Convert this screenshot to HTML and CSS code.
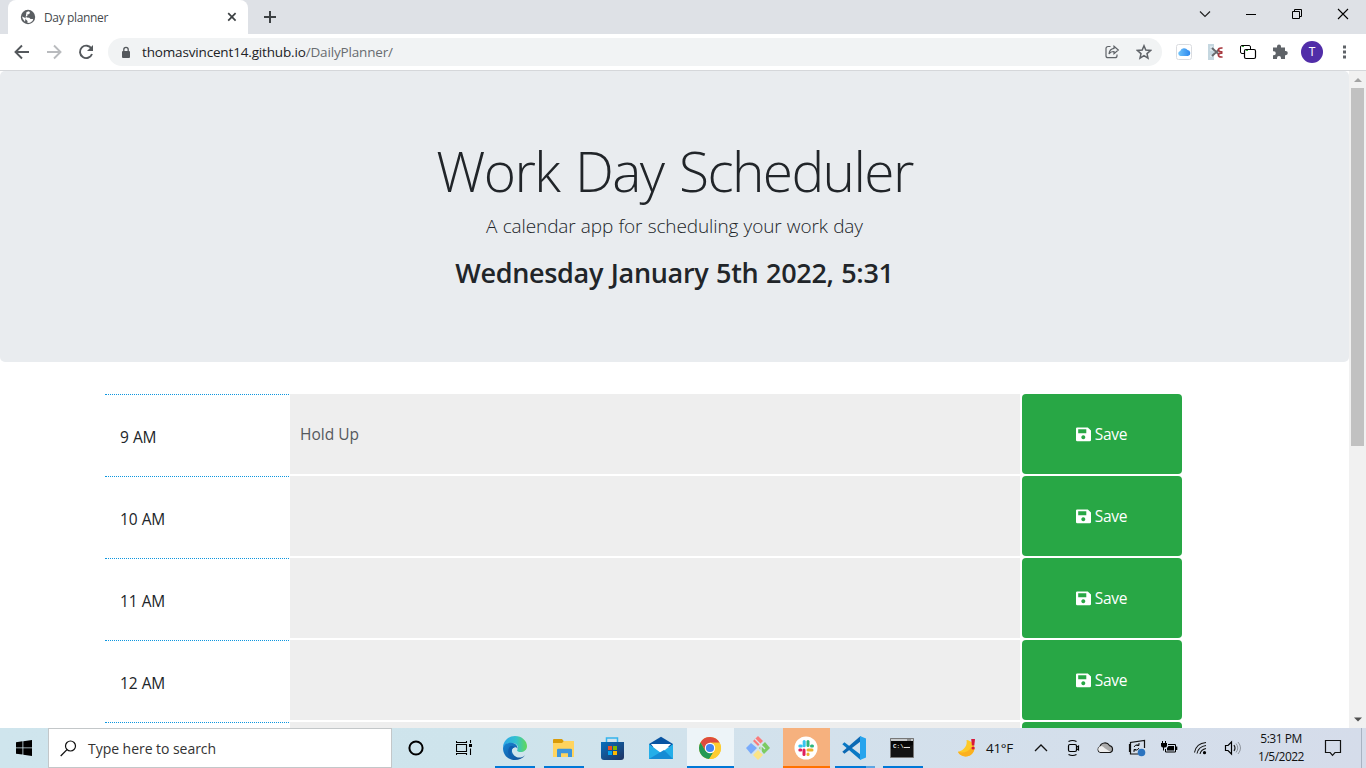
FILE: index.html
```html
<!DOCTYPE html>
<html lang="en">
<head>
<meta charset="utf-8">
<title>Day planner</title>
<link rel="stylesheet" href="styles.css">
</head>
<body>
<svg class="defs" width="0" height="0">
  <symbol id="save" viewBox="0 0 15 15"><path fill-rule="evenodd" d="M1.2.4h10.6L15 3.4V13a1.3 1.3 0 0 1-1.3 1.3H1.300A1.300 1.300 0 0 1 0 13V1.600A1.200 1.200 0 0 1 1.200.4zM2.200 2.300v3.900h8.100V2.300zM7.300 8.300a2 2 0 1 0 .01 0z"/></symbol>
</svg>
<div class="screen">
  <header class="tabstrip">
    <div class="tab">
      <svg class="globe" width="16" height="16" viewBox="0 0 16 16"><circle cx="8" cy="8" r="7.200" fill="#5a5e62"/><path d="M6.500 3 9 2.200l1 1.500-1 1.600H7.500v1.400l-1.300.6.5 1.200 2.600.2 1.200 1.300 2.700.1L12.500 12 10 13.700l-2.500.2V12L6 10.600 5.300 9 2 7.600 2.800 9.800 5 12.800" fill="#fff"/></svg>
      <span class="tab-title">Day planner</span>
      <svg width="10" height="10" viewBox="0 0 10 10"><path d="M1.200 1.200l7.400 7.400M8.600 1.200 1.200 8.600" stroke="#3c4043" stroke-width="1.700"/></svg>
    </div>
    <svg class="newtab" width="14" height="14" viewBox="0 0 14 14"><path d="M7 1v12M1 7h12" stroke="#3c4043" stroke-width="2"/></svg>
    <div class="winctl">
      <svg viewBox="0 0 46 28"><path d="M18 11.500l5 5 5-5" fill="none" stroke="#222" stroke-width="1.200"/></svg>
      <svg viewBox="0 0 46 28"><path d="M18 14.500h10" stroke="#000"/></svg>
      <svg viewBox="0 0 46 28"><path d="M18.500 11.500h7v7h-7zM20.500 11V9.500h7v7H26" fill="none" stroke="#000"/></svg>
      <svg viewBox="0 0 46 28"><path d="M18 9l10 10M28 9 18 19" stroke="#000" stroke-width="1.100"/></svg>
    </div>
  </header>
  <nav class="toolbar">
    <svg class="nav" viewBox="0 0 32 32"><path d="M23 16H10M16 9.500 9.500 16l6.500 6.500" fill="none" stroke="#54585c" stroke-width="1.900"/></svg>
    <svg class="nav" viewBox="0 0 32 32"><path d="M9 16h13M16 9.500l6.500 6.500-6.500 6.500" fill="none" stroke="#b9bbbe" stroke-width="1.900"/></svg>
    <svg class="nav" viewBox="0 0 32 32"><path d="M21.500 12.700A6.200 6.200 0 1 0 22 18" fill="none" stroke="#54585c" stroke-width="1.900"/><path d="M23 9v6h-6z" fill="#54585c"/></svg>
    <div class="omnibox">
      <svg width="10" height="13" viewBox="0 0 10 13"><rect x="1" y="5" width="8" height="7" rx="1" fill="#54585c"/><path d="M2.800 5.500V3.500a2.200 2.200 0 0 1 4.400 0v2" fill="none" stroke="#54585c" stroke-width="1.300"/></svg>
      <span class="url">thomasvincent14.github.io<span class="path">/DailyPlanner/</span></span>
      <svg class="share" width="16" height="16" viewBox="0 0 16 16"><path d="M6.500 2.500H4a2 2 0 0 0-2 2v7.200a2 2 0 0 0 2 2h7a2 2 0 0 0 2-2V10.500" fill="none" stroke="#5f6368" stroke-width="1.200"/><path d="M10 2.300 14.300 6 10 9.600V7.500c-2.300 0-4 .7-5 2.500.3-3 2-5.200 5-5.600z" fill="none" stroke="#5f6368" stroke-width="1.200"/></svg>
      <svg width="16" height="16" viewBox="0 0 16 16"><path d="M8 1.800l1.800 4.300 4.700.4L11 9.600l1 4.600-4-2.500-4 2.500 1-4.600-3.500-3.100 4.700-.4z" fill="none" stroke="#5f6368" stroke-width="1.500"/></svg>
    </div>
    <div class="exts">
      <svg viewBox="0 0 32 32"><defs><linearGradient id="cl"><stop stop-color="#6fc3fa"/><stop offset="1" stop-color="#2c88ee"/></linearGradient></defs><rect x="8.500" y="8.500" width="15" height="15" rx="2" fill="#fff" stroke="#dadce0"/><path d="M12.500 20a2.600 2.600 0 0 1-.3-5.100 4.200 4.200 0 0 1 7.400-.8 3 3 0 0 1 .4 5.900z" fill="url(#cl)"/></svg>
      <svg viewBox="0 0 32 32"><path d="M8 8h6v16H8z" fill="#c5d7e0"/><path d="M10 11h3M10 14h3M10 20h3" stroke="#eef5f8"/><path d="M12 12l7 6.500M12 20l7-6.500" stroke="#66696d" stroke-width="1.900"/><path d="M22.500 12.200c-3-.7-4.500.8-4 2.300s2.500 1.500 4 1.300M22.500 20.800c-3 .7-4.500-.8-4-2.300s2.500-1.500 4-1.300" fill="none" stroke="#a8393f" stroke-width="1.700"/></svg>
      <svg viewBox="0 0 32 32"><rect x="8.500" y="9.500" width="10" height="8" rx="1.500" fill="#fff" stroke="#000"/><rect x="12.500" y="13.500" width="11" height="9" rx="1.500" fill="#fff" stroke="#000" stroke-width="1.200"/><path d="M10 10.500h2M14 14.500h2" stroke="#38a638"/></svg>
      <svg viewBox="0 0 32 32"><path d="M9 11.500h4V10.600a2 2 0 0 1 4 0v.9h4V15h.7a2.100 2.100 0 0 1 0 4.200H21V23h-4v-1a2 2 0 0 0-4 0v1H9v-3.800h.8a2 2 0 0 0 0-4H9z" fill="#5f6368"/></svg>
      <span class="avatar">T</span>
      <svg viewBox="0 0 32 32"><path fill="#5f6368" d="M15 9.500h3v3h-3zM15 14.500h3v3h-3zM15 19.500h3v3h-3z"/></svg>
    </div>
  </nav>
  <main class="viewport">
    <div class="page">
      <section class="jumbotron">
        <h1>Work Day Scheduler</h1>
        <p class="lead">A calendar app for scheduling your work day</p>
        <p class="today">Wednesday January 5th 2022, 5:31</p>
      </section>
      <section class="planner">
        <div class="row"><div class="hour">9 AM</div><div class="entry">Hold Up</div><button class="save"><svg width="15" height="15"><use href="#save"/></svg><span>Save</span></button></div>
        <div class="row"><div class="hour">10 AM</div><div class="entry"></div><button class="save"><svg width="15" height="15"><use href="#save"/></svg><span>Save</span></button></div>
        <div class="row"><div class="hour">11 AM</div><div class="entry"></div><button class="save"><svg width="15" height="15"><use href="#save"/></svg><span>Save</span></button></div>
        <div class="row"><div class="hour">12 AM</div><div class="entry"></div><button class="save"><svg width="15" height="15"><use href="#save"/></svg><span>Save</span></button></div>
        <div class="row"><div class="hour"></div><div class="entry"></div><button class="save"></button></div>
      </section>
    </div>
    <div class="scrollbar">
      <svg width="17" height="17"><path d="M5 11h8L9 7z" fill="#a3a3a3"/></svg>
      <div class="thumb"></div>
      <svg width="17" height="17"><path d="M5 6.500h8L9 10.500z" fill="#505050"/></svg>
    </div>
  </main>
  <footer class="taskbar">
    <div class="start"><svg width="16" height="16" viewBox="0 0 16 16"><path d="M0 2.200 6.500 1.300v6.200H0zM7.300 1.200 16 0v7.500H7.300zM0 8.300h6.500v6.300L0 13.700zM7.300 8.300H16V16l-8.700-1.200z"/></svg></div>
    <div class="search"><svg width="17" height="17" viewBox="0 0 17 17"><circle cx="10.500" cy="6" r="5" fill="none" stroke="#111" stroke-width="1.200"/><path d="M7 9.600.7 16" stroke="#111" stroke-width="1.300"/></svg><span>Type here to search</span></div>
    <div class="shell">
      <svg width="16" height="16" viewBox="0 0 16 16"><circle cx="8" cy="8" r="6.600" fill="none" stroke="#000" stroke-width="2"/></svg>
      <svg width="17" height="16" viewBox="0 0 17 16"><path d="M.5 1v1.500h10V1M.5 15v-1.500h10V15M.5 4.500h10v7H.500zM14.500 0v3M14.500 8.500V15" fill="none" stroke="#000" stroke-width="1.100"/><path d="M13 4h3v3h-3z"/></svg>
    </div>
    <div class="apps">
      <div class="app wide open"><svg viewBox="0 0 24 24"><defs><linearGradient id="e1" x1="0" x2="1"><stop stop-color="#2aa6e8"/><stop offset=".55" stop-color="#34c1cf"/><stop offset="1" stop-color="#62d957"/></linearGradient><linearGradient id="e2" x1="0" y1="0" x2="1" y2="1"><stop stop-color="#1686d5"/><stop offset="1" stop-color="#104a91"/></linearGradient></defs><path d="M0 12C0 5 5.500 0 12 0c7 0 12 5 12 10 0 4.200-3.300 6-6.300 6-2.700 0-4-1-3.500-2 2.400-4-1.200-7-5.200-7C4 7 1 9 0 12z" fill="url(#e1)"/><path d="M0 12c1-4 4.500-5.400 8-5.300 4.500.2 7 3 6.500 6.300-.4-2-3-2.400-4.600-1-3 3.500 1.500 9.500 6.300 9.500 2.500 0 4-.5 6-2.500C20 22.500 16 24 12 24 5 24 0 19 0 12z" fill="url(#e2)"/><path d="M6.500 11C3 17 7 23 13 24c-4-1.500-6.500-6-4.500-10 .7-1.500 1.800-2.200 3-2.500-1.500-2.300-4-1.500-5-.5z" fill="#0f5eb0"/></svg></div>
      <div class="app wide open"><svg viewBox="0 0 24 24"><path d="M1 4q0-1 1-1h8l2 2.500V9H1z" fill="#d99b09"/><path d="M1 7h9l2-2h10v16H1z" fill="#ffd45e"/><path d="M5 14q0-1.200 1.200-1.200h12.600q1.200 0 1.200 1.200v7h-4v-3.700H9V21H5z" fill="#3d95dc"/></svg></div>
      <div class="app wide"><svg viewBox="0 0 24 24"><defs><linearGradient id="st" x2="1" y2="1"><stop stop-color="#0870bd"/><stop offset="1" stop-color="#203261"/></linearGradient></defs><path d="M6.500 7V2h11v5" fill="none" stroke="#34b4ec" stroke-width="1.500"/><path d="M1 6h23v15q0 3-3 3H4q-3 0-3-3z" fill="url(#st)"/><path d="M8 10h4v4H8z" fill="#f25022"/><path d="M13 10h4v4h-4z" fill="#7fba00"/><path d="M8 15h4v4H8z" fill="#00a4ef"/><path d="M13 15h4v4h-4z" fill="#ffb900"/></svg></div>
      <div class="app wide"><svg viewBox="0 0 24 24"><path d="M0 8 12 .8 24 8v3H0z" fill="#0954a2"/><path d="M2 8h20l-8 8H8z" fill="#fff"/><path d="M0 8l12 9 12-9v15H0z" fill="#24aee9"/><path d="M0 23 15 14l9 9z" fill="#168bd4"/></svg></div>
      <div class="app active"><svg viewBox="0 0 24 24"><circle cx="12" cy="12" r="11" fill="#fccc32"/><path d="M2.500 6.500A11 11 0 0 1 21.600 6.700H12l-4.600 8z" fill="#de4b3e"/><path d="M2.500 6.500 7.400 14.700 12 17.300l3.200-1-4 6.700A11 11 0 0 1 2.500 6.500z" fill="#239954"/><path d="M12 6.700h9.600A11 11 0 0 1 11.200 23l5.400-8z" fill="#fccc32"/><circle cx="12" cy="12" r="5.200" fill="#fff"/><circle cx="12" cy="12" r="4.100" fill="#4285f4"/></svg></div>
      <div class="app"><svg viewBox="0 0 24 24"><path d="M7 5l5-5 5 5-5 5z" fill="#fa7b7b"/><path d="M0 12l5-5 6 5-6 6z" fill="#79abfb"/><path d="M13 12l6-6 5 6-6 6z" fill="#7ccb63"/><path d="M7 19l5-5 5 5-5 5z" fill="#fbe487"/><path d="M9 3l6 6v8M15 9l4 4" fill="none" stroke="#dce6ee" stroke-width="1.300"/></svg></div>
      <div class="app slack"><svg viewBox="0 0 24 24"><circle cx="12" cy="12" r="11.500" fill="#fff"/><g fill="none" stroke-width="3" stroke-linecap="round"><path d="M10.200 5.500v4.200" stroke="#36c5f0"/><path d="M5.800 10h1.500" stroke="#36c5f0"/><path d="M14 5.500v4" stroke="#2eb67d"/><path d="M17.500 10h1" stroke="#2eb67d"/><path d="M14 14h4" stroke="#ecb22e"/><path d="M14 18v.5" stroke="#ecb22e"/><path d="M10 14v4.500" stroke="#e01e5a"/><path d="M5.800 14h1" stroke="#e01e5a"/></g></svg></div>
      <div class="app open multi"><svg viewBox="0 0 24 24"><path d="M.3 8.300 2.400 6.300 18.500 18.500V24z" fill="#0a78c4"/><path d="M.3 15.700 18.500 0v5.500L2.400 17.700z" fill="#0c69b4"/><path d="M18 0l6 2.600v18.800L18 24z" fill="#27a4ed"/></svg></div>
      <div class="app open cmd"><svg viewBox="0 0 24 24"><path d="M.5 2.500h23v19H.5z" fill="#050505" stroke="#777"/><path d="M1 3h22v2H1z" fill="#c7cacc"/><path d="M17 4h4" stroke="#555"/><text x="3" y="11.500">C:\.</text><path d="M14 11.500h6" stroke="#ddd"/><path d="M1 13 23 9v12H1z" fill="#fff" opacity=".06"/></svg></div>
    </div>
    <div class="weather"><svg width="20" height="20" viewBox="0 0 20 20"><path d="M9.500 2C10.500 7 8 12 1 13.800c1 2.700 4 4.700 7.500 4.700 5.500 0 9-4 9-8.700C17.500 6 14 2.500 9.500 2z" fill="#fdc928"/><path d="M1 13.800c5 1.700 10.500.2 13-4.300l3.500.3c0 4.700-3.500 8.700-9 8.700C5 18.500 2 16.500 1 13.800z" fill="#fbb01f"/><path d="M14.200 1h3.800l-.7 6.500h-2.400z" fill="#d8183b"/><circle cx="16.100" cy="10" r="1.600" fill="#d8183b"/></svg><span>41°F</span></div>
    <div class="tray">
      <svg viewBox="0 0 32 32"><path d="M10 19l6-6 6 6" fill="none" stroke="#111" stroke-width="1.300"/></svg>
      <svg viewBox="0 0 32 32"><rect x="11.500" y="12.500" width="8" height="7" rx="1.500" fill="none" stroke="#000" stroke-width="1.200"/><path d="M20 15l1.500-1v4L20 17M11.500 9.500q4-2 8 0M11.500 22.500q4 2 8 0" fill="none" stroke="#000" stroke-width="1.200"/></svg>
      <svg viewBox="0 0 32 32"><path d="M11.500 20.500a3 3 0 0 1-.7-5.700 5.300 5.300 0 0 1 9.700-1.200 3.600 3.600 0 0 1 .8 6.900z" fill="#aaa" stroke="#171717" stroke-width="1.100"/><path d="M10 15l2-1q2 0 3.500 2l6 4H11q-3-2-1-5" fill="#ededed"/></svg>
      <svg viewBox="0 0 32 32"><path d="M17 22H9.500V10.500L23.500 8.500V16M9.500 12.500h-1v7h1" fill="none" stroke="#111" stroke-width="1.200"/><path d="M13 15q1-3 5-2M18 11v2.500h-2.500M18 16q-1 3-5 2M13 20v-2.500h2" fill="none" stroke="#111"/><circle cx="20.500" cy="20.500" r="3.800" fill="#2b73bf"/></svg>
      <svg viewBox="0 0 32 32"><path d="M15 12.500h7.500v7.500H12.500V17" fill="none" stroke="#000"/><path d="M15.500 14H21v4.500h-7V16zM23 14.500h1.300v3.500H23zM8 11h6v2.500q0 2-2 2H10q-2 0-2-2z"/><path d="M9.500 9v2M12.500 9v2M10.500 15v3.500" stroke="#000"/></svg>
      <svg viewBox="0 0 32 32"><g fill="none" stroke="#111" stroke-width="1.100"><path d="M9.500 20.500Q11 11.500 21 10.500"/><path d="M12 21.500q1.500-7 9-8"/><path d="M15 22q1-4.500 6-5.500"/></g><circle cx="19.500" cy="20.700" r="1.600"/></svg>
      <svg viewBox="0 0 32 32"><path d="M8.500 13.500h2.500l3.500-3.500v12L11 18.500H8.500z" fill="none" stroke="#000" stroke-width="1.200"/><path d="M17 13q2 3 0 6" fill="none" stroke="#222" stroke-width="1.200"/><path d="M19 11.500q3.500 4.500 0 9M21 10q5 6 0 12" fill="none" stroke="#8d939b"/></svg>
    </div>
    <div class="clock"><span>5:31 PM</span><span>1/5/2022</span></div>
    <svg class="notif" width="18" height="18" viewBox="0 0 18 18"><path d="M1.500 1.500h15v12H11l-2.500 2.800L6.200 13.500H1.500z" fill="none" stroke="#111" stroke-width="1.200"/></svg>
  </footer>
</div>
</body>
</html>
```
FILE: styles.css
```css
* { box-sizing: border-box; }
body { margin: 0; font-family: "Open Sans", "Noto Sans", sans-serif; color: #212529; }
svg { display: block; flex: none; }
.defs { display: none; }
.screen { width: 1366px; height: 768px; display: flex; flex-direction: column; overflow: hidden; background: #fff; }

.tabstrip { height: 34px; flex: none; display: flex; background: #dee1e6; padding-left: 8px; }
.tab { width: 240px; background: #fff; border-radius: 8px 8px 0 0; display: flex; align-items: center; padding: 0 11px 0 12px; }
.tab-title { flex: 1; margin-left: 8px; font-size: 12px; letter-spacing: -.35px; color: #45494d; }
.newtab { margin: 10px 0 0 15px; }
.winctl { display: flex; margin-left: auto; }
.winctl svg { width: 46px; height: 28px; }

.toolbar { height: 37px; flex: none; display: flex; align-items: center; padding: 0 6px; border-bottom: 1px solid #d5d7da; }
.nav { width: 32px; height: 32px; }
.omnibox { width: 1054px; height: 28px; margin-left: 6px; border-radius: 14px; background: #f1f3f4; display: flex; align-items: center; padding: 0 10px 0 13px; }
.url { margin-left: 11px; font-size: 13.5px; letter-spacing: -.16px; color: #202124; }
.path { color: #686c70; }
.share { margin: 0 16px 0 auto; }
.exts { display: flex; align-items: center; margin-left: 6px; }
.exts svg { width: 32px; height: 32px; }
.avatar { width: 22px; height: 22px; margin: 0 5px; border-radius: 50%; background: #512da8; color: #fff; font-size: 12px; line-height: 22px; text-align: center; }

.viewport { flex: 1; min-height: 0; display: flex; overflow: hidden; }
.page { width: 1349px; overflow: hidden; }
.jumbotron { height: 291px; padding-top: 64px; background: #e9ecef; border-radius: 5px; text-align: center; }
.jumbotron h1 { margin: 0; font-size: 55px; line-height: 67px; font-weight: 300; letter-spacing: -1.6px; word-spacing: 3px; padding-top: 2px; }
.lead { margin: 7px 0 0; font-size: 19px; line-height: 30px; font-weight: 300; letter-spacing: -.12px; word-spacing: .5px; }
.today { margin: 15px 0 0; font-size: 27px; line-height: 34px; font-weight: 600; letter-spacing: -.32px; word-spacing: 1px; }
.planner { width: 1077px; margin: 32px 0 0 105px; display: flex; flex-direction: column; gap: 2px; }
.row { height: 80px; display: grid; grid-template-columns: 184px 730px 161px; grid-template-rows: 80px; column-gap: 1px; }
.hour { border-top: 1px dotted #0d96df; padding: 30px 15px 0; font-size: 15.500px; line-height: 24px; letter-spacing: -.2px; word-spacing: .5px; }
.entry { background: #eee; padding: 28px 10px 0; font-size: 15.500px; line-height: 24px; color: #55595d; }
.save { margin-left: 1px; border: 0; border-radius: 4px; background: #28a745; color: #fff; font: 15.500px/24px "Open Sans", "Noto Sans", sans-serif; letter-spacing: -.3px; display: flex; justify-content: center; align-items: center; gap: 4px; padding: 0 1px 0 0; }
.save svg { fill: #fff; }
.scrollbar { width: 17px; background: #f1f1f1; display: flex; flex-direction: column; }
.thumb { width: 13px; height: 358px; margin: 0 2px auto; background: #c1c1c1; }

.taskbar { height: 40px; flex: none; display: flex; align-items: center; background: linear-gradient(90deg, #cfe5ed 0%, #cee4ec 35%, #d3e1ec 60%, #d5dcea 100%); color: #111; }
.start { width: 48px; display: flex; justify-content: center; }
.search { width: 344px; height: 40px; border: 1px solid #c3c7c9; background: #fff; display: flex; align-items: center; padding-left: 11px; font-size: 14px; color: #333; }
.search span { margin-left: 11px; letter-spacing: -.04px; }
.shell { width: 99px; display: flex; padding-left: 16px; gap: 32px; }
.apps { display: flex; gap: 1px; height: 40px; }
.app { width: 47px; height: 40px; display: flex; align-items: center; justify-content: center; padding-right: 2px; }
.app svg { width: 24px; height: 24px; }
.wide { width: 48px; padding-right: 1px; }
.wide:nth-child(n+3) { padding-right: 2px; }
.open { background: linear-gradient(#0078d7, #0078d7) center bottom / 40px 2px no-repeat; }
.active { background: #edf4f8; border-bottom: 2px solid #0078d7; padding-top: 2px; }
.slack { background: #f6b17e; border-bottom: 2px solid #ff7100; padding-top: 2px; }
.multi { background: linear-gradient(90deg, #0078d7 31px, #5da5e3 31px) center bottom / 40px 2px no-repeat; }
.cmd text { font: bold 6px "Liberation Mono", monospace; fill: #eee; }
.weather { margin-left: 31px; width: 68px; display: flex; align-items: center; gap: 9px; font-size: 13.500px; letter-spacing: -.3px; }
.tray { display: flex; }
.tray svg { width: 32px; height: 32px; }
.clock { width: 66px; display: flex; flex-direction: column; align-items: center; padding-right: 2px; font-size: 12px; line-height: 18px; letter-spacing: -.5px; }
.notif { margin-left: 9px; }
.taskbar::after { content: ""; width: 1px; height: 40px; margin: 0 4px 0 auto; background: #a9b3c2; }
```
